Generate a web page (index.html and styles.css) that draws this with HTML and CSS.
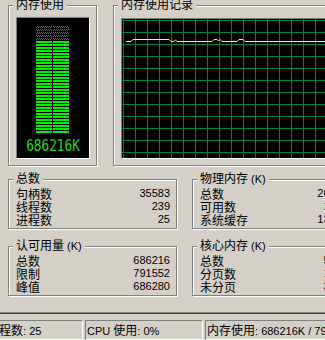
FILE: index.html
```html
<!DOCTYPE html>
<html lang="zh-CN">
<head>
<meta charset="utf-8">
<title>Windows 任务管理器 - 性能</title>
<link rel="stylesheet" href="styles.css">
</head>
<body>
<div class="window">
  <div class="tabpage">
    <div class="row row-top">
      <section class="group g-meter">
        <span class="title"><span class="cn">内存使用</span></span>
        <div class="meter">
          <div class="bars">
            <div class="bars-dim"></div>
            <div class="bars-lit"></div>
          </div>
          <div class="lcd">686216K</div>
        </div>
      </section>
      <section class="group g-graph">
        <span class="title"><span class="cn">内存使用记录</span></span>
        <div class="graph">
          <svg class="trace" width="300" height="139" viewBox="0 0 300 139">
            <polyline points="4,22.5 9,22.5 11,20.5 47,20.5 49,22.5 52,22.5 53.5,20.8 55,22.5 90,22.5 92,20.5 95,20.5 96.5,22 98,20.5 100,22.5 115,22.5 117,20.5 121,20.5 123,22.5 300,22.5"/>
          </svg>
        </div>
      </section>
    </div>

    <div class="row row-mid">
      <section class="group g-stats">
        <span class="title"><span class="cn">总数</span></span>
        <div class="kv"><span class="cn">句柄数</span><span class="num">35583</span></div>
        <div class="kv"><span class="cn">线程数</span><span class="num">239</span></div>
        <div class="kv"><span class="cn">进程数</span><span class="num">25</span></div>
      </section>
      <section class="group g-stats">
        <span class="title"><span class="cn">物理内存</span> (K)</span>
        <div class="kv"><span class="cn">总数</span><span class="num">261616</span></div>
        <div class="kv"><span class="cn">可用数</span><span class="num">17140</span></div>
        <div class="kv"><span class="cn">系统缓存</span><span class="num">130584</span></div>
      </section>
    </div>

    <div class="row row-bot">
      <section class="group g-stats">
        <span class="title"><span class="cn">认可用量</span> (K)</span>
        <div class="kv"><span class="cn">总数</span><span class="num">686216</span></div>
        <div class="kv"><span class="cn">限制</span><span class="num">791552</span></div>
        <div class="kv"><span class="cn">峰值</span><span class="num">686280</span></div>
      </section>
      <section class="group g-stats">
        <span class="title"><span class="cn">核心内存</span> (K)</span>
        <div class="kv"><span class="cn">总数</span><span class="num">51632</span></div>
        <div class="kv"><span class="cn">分页数</span><span class="num">17736</span></div>
        <div class="kv"><span class="cn">未分页</span><span class="num">33896</span></div>
      </section>
    </div>
  </div>

  <div class="statusbar">
    <div class="panel p1"><span class="cn">进程数</span>: 25</div>
    <div class="panel p2">CPU <span class="cn">使用</span>: 0%</div>
    <div class="panel p3"><span class="cn">内存使用</span>: 686216K / 791552K</div>
  </div>
</div>
</body>
</html>
```

FILE: styles.css
```css
* { box-sizing: border-box; }

html, body { margin: 0; padding: 0; }

body {
  width: 325px;
  height: 340px;
  overflow: hidden;
  background: #d4d0c8;
  font-family: "Liberation Sans", "Noto Sans CJK SC", sans-serif;
  font-size: 11px;
  color: #000;
}

.cn {
  font-family: "Noto Sans CJK SC", sans-serif;
  font-size: 12px;
}

.window { width: 440px; }

.tabpage {
  height: 313px;
  padding: 5px 0 0 8px;
  border-bottom: 1px solid #808080;
  box-shadow: 0 1px 0 #404040;
}

.row { display: flex; }
.row-top { gap: 16px; }
.row-mid { gap: 15px; margin-top: 13px; }
.row-bot { gap: 15px; margin-top: 17px; }

.group {
  position: relative;
  flex: none;
  border: 1px solid #808080;
  box-shadow: inset 1px 1px 0 #fff, 1px 1px 0 #fff;
}

.title {
  position: absolute;
  top: -8px;
  left: 4px;
  height: 12px;
  padding: 0 3px;
  line-height: 12px;
  background: #d4d0c8;
  white-space: nowrap;
}
.title .cn { line-height: 12px; }

/* memory usage meter */
.g-meter {
  width: 89px;
  height: 161px;
  padding: 11px 0 0 7px;
}

.meter {
  width: 74px;
  height: 142px;
  padding-top: 8px;
  background: #000;
  border: 1px solid;
  border-color: #808080 #fff #fff #808080;
}

.bars { width: 33px; margin-left: 19px; }

.bars-dim {
  height: 15px;
  background:
    linear-gradient(to right, transparent 16px, #000 16px 17px, transparent 17px),
    repeating-linear-gradient(to bottom, transparent 0 2px, #000 2px 3px),
    repeating-conic-gradient(#00b000 0 25%, #000 0 50%) 0 0 / 2px 2px;
}

.bars-lit {
  height: 93px;
  background:
    linear-gradient(to right, transparent 16px, #000 16px 17px, transparent 17px),
    repeating-linear-gradient(to bottom, #00f000 0 2px, #000 2px 3px);
}

.lcd {
  margin-top: 6px;
  width: 72px;
  text-align: center;
  font-family: "DejaVu Sans Mono", monospace;
  font-size: 15px;
  line-height: 12px;
  color: #22d822;
  transform: scaleX(0.85);
}

/* history graph */
.g-graph {
  width: 300px;
  height: 161px;
  padding: 12px 0 0 7px;
}

.graph {
  width: 282px;
  height: 141px;
  border: 1px solid;
  border-color: #808080 #fff #fff #808080;
  background-color: #000;
  background-image:
    linear-gradient(to right, #008040 1px, transparent 1px),
    linear-gradient(to bottom, #008040 1px, transparent 1px);
  background-size: 12px 12px;
  background-position: 1px 1px;
}

.trace { display: block; }
.trace polyline {
  fill: none;
  stroke: #ffff40;
  stroke-width: 1;
}

/* stats groups */
.g-stats {
  width: 169px;
  height: 50px;
  padding: 7px 6px 0 7px;
}

.kv {
  display: flex;
  justify-content: space-between;
  height: 13px;
  line-height: 13px;
  white-space: nowrap;
}
.kv .cn { line-height: 13px; }

/* status bar */
.statusbar {
  display: flex;
  gap: 2px;
  padding-top: 7px;
  height: 27px;
}

.panel {
  flex: none;
  height: 20px;
  padding: 0 1px;
  line-height: 17px;
  white-space: nowrap;
  overflow: hidden;
  border: 1px solid;
  border-color: #808080 #fff #fff #808080;
}
.panel .cn { line-height: 17px; }

.p1 { width: 98px; margin-left: -15px; }
.p2 { width: 118px; }
.p3 { width: 200px; }
```
